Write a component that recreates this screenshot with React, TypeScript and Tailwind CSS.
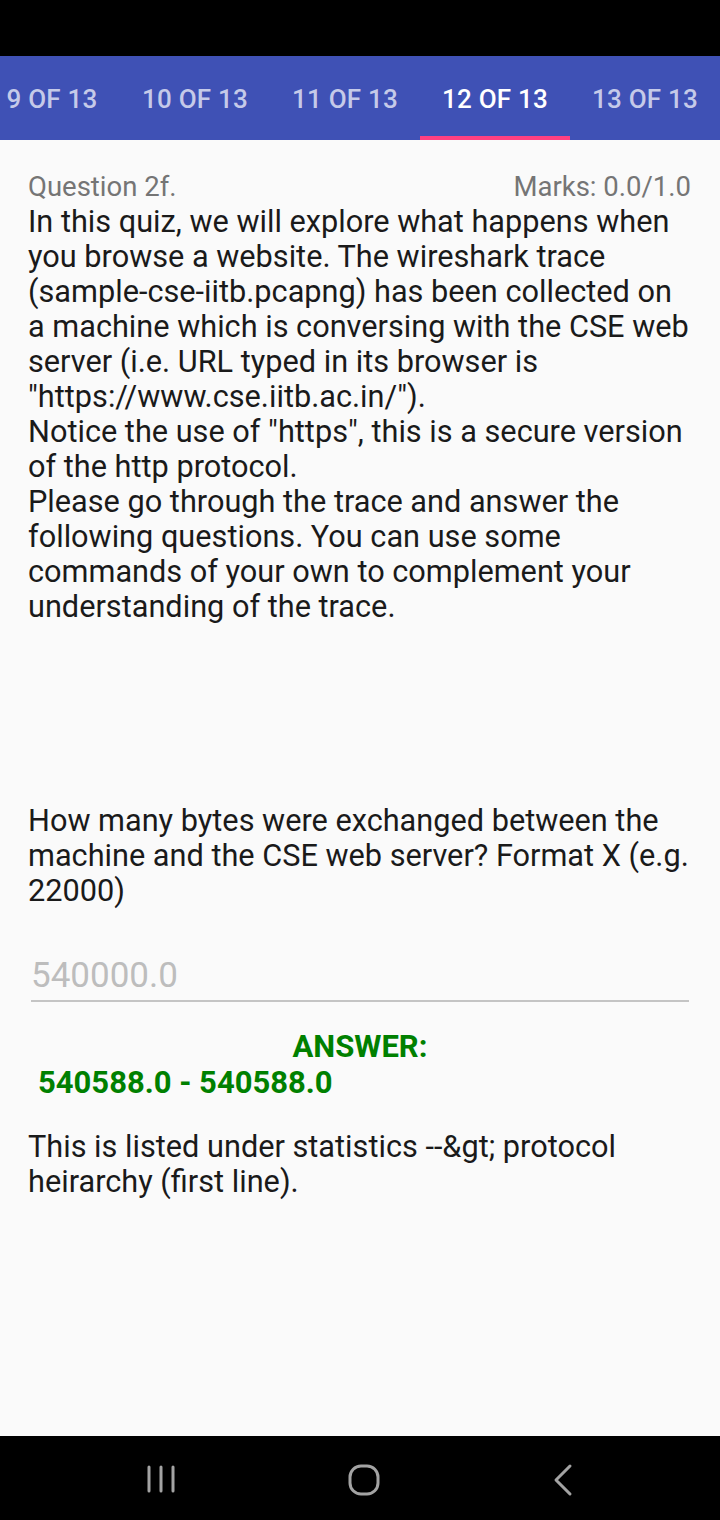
import React from 'react';

const tabs = [
  { label: '9 OF 13', w: 'w-[136px]' },
  { label: '10 OF 13', w: 'w-[150px]' },
  { label: '11 OF 13', w: 'w-[150px]' },
  { label: '12 OF 13', w: 'w-[150px]', active: true },
  { label: '13 OF 13', w: 'w-[150px]' },
];

const TabBar = () => (
  <div className="h-[84px] bg-[#3f51b5] overflow-hidden">
    <div className="flex h-full ml-[-16px]">
      {tabs.map((t) => (
        <div
          key={t.label}
          className={`${t.w} shrink-0 h-full flex flex-col ${
            t.active ? 'text-white' : 'text-[#c5cae9]'
          }`}
        >
          <div className="flex-1 flex items-center justify-center text-[26px] font-medium tracking-[0.2px] pt-[6px]">
            {t.label}
          </div>
          <div className={`h-[4px] ${t.active ? 'bg-[#ff4081]' : ''}`} />
        </div>
      ))}
    </div>
  </div>
);

const NavBar = () => (
  <div className="h-[84px] bg-black flex items-center justify-between px-[145px] pb-[2px]">
    <svg width="32" height="32" viewBox="0 0 32 32" className="mt-[6px]">
      <g stroke="#a3a3a3" strokeWidth="3" strokeLinecap="round">
        <line x1="4" y1="3" x2="4" y2="27" />
        <line x1="16" y1="3" x2="16" y2="27" />
        <line x1="28" y1="3" x2="28" y2="27" />
      </g>
    </svg>
    <svg width="34" height="34" viewBox="0 0 34 34" className="mt-[6px]">
      <rect x="3" y="3" width="28" height="28" rx="11" fill="none" stroke="#a3a3a3" strokeWidth="3" />
    </svg>
    <svg width="24" height="34" viewBox="0 0 24 34" className="mt-[6px]">
      <polyline points="19,3 5,17 19,31" fill="none" stroke="#a3a3a3" strokeWidth="3" strokeLinecap="round" strokeLinejoin="round" />
    </svg>
  </div>
);

export default function App() {
  return (
    <div
      className="w-[720px] h-[1520px] flex flex-col bg-[#fafafa]"
      style={{ fontFamily: 'Roboto, "Noto Sans", sans-serif' }}
    >
      <div className="h-[56px] bg-black" />
      <TabBar />
      <main className="flex-1 px-[28px] pt-[30px]">
        <div className="flex justify-between items-center text-[27.5px] leading-[34px] text-[#757575]">
          <span>Question 2f.</span>
          <span className="mr-[1px]">Marks: 0.0/1.0</span>
        </div>
        <div className="text-[30.7px] leading-[35px] text-[#1a1a1a]">
          <p>
            In this quiz, we will explore what happens when you browse a website. The wireshark trace
            (sample-cse-iitb.pcapng) has been collected on a machine which is conversing with the CSE
            web server (i.e. URL typed in its browser is "https://www.cse.iitb.ac.in/").
          </p>
          <p>Notice the use of "https", this is a secure version of the http protocol.</p>
          <p>
            Please go through the trace and answer the following questions. You can use some commands
            of your own to complement your understanding of the trace.
          </p>
          <p className="mt-[179px]">
            How many bytes were exchanged between the machine and the CSE web server? Format X (e.g.
            22000)
          </p>
        </div>
        <div className="mt-[45px] mx-[3px] border-b-2 border-[#c4c4c4] pt-[3px] pb-[4px]">
          <span className="text-[35px] leading-[40px] text-[#bdbdbd]">540000.0</span>
        </div>
        <div className="mt-[27px] text-center text-[31px] leading-[36px] font-bold text-[#008000]">
          ANSWER:
        </div>
        <div className="ml-[10px] text-[31px] leading-[36px] font-bold text-[#008000]">
          540588.0 - 540588.0
        </div>
        <p className="mt-[28px] text-[30.7px] leading-[35px] text-[#1a1a1a]">
          This is listed under statistics --&amp;gt; protocol heirarchy (first line).
        </p>
      </main>
      <NavBar />
    </div>
  );
}
